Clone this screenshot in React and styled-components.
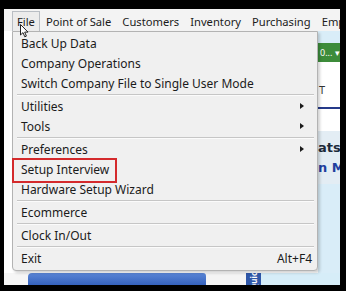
import React from "react";
import styled, { createGlobalStyle } from "styled-components";

const GlobalStyle = createGlobalStyle`
  html, body { margin: 0; padding: 0; background: #000; }
  * { box-sizing: border-box; }
`;

const Frame = styled.div`
  width: 346px;
  height: 291px;
  background: #000;
  padding: 9px 6px 6px 4px;
`;

const Window = styled.div`
  position: relative;
  height: 100%;
  background: #fff;
  display: flex;
  flex-direction: column;
  overflow: hidden;
  font-family: "Noto Sans", "Open Sans", sans-serif;
  font-size: 12px;
  color: #1b1b1b;
`;

const MenuBar = styled.div`
  height: 22px;
  flex: none;
  display: flex;
  align-items: stretch;
  padding: 2px 0 0 8px;
  background: #f3f3f3;
  white-space: nowrap;
  font-size: 11.2px;
`;

const BarItem = styled.div`
  display: flex;
  align-items: center;
  padding: 0 4px;
  margin-right: 1px;
  border: 1px solid ${(p) => (p.$open ? "#b9bec4" : "transparent")};
  border-bottom: 0;
  background: ${(p) => (p.$open ? "#ececec" : "transparent")};
`;

const Content = styled.div`
  flex: 1;
  display: grid;
  grid-template-columns: 1fr 22px;
  grid-template-rows: 1fr 12px;
`;

const LeftArea = styled.div`
  background: #fff;
`;

const RightPanel = styled.div`
  display: flex;
  flex-direction: column;
  padding-top: 12px;
  overflow: hidden;
  white-space: nowrap;
  background: #d9edf8;
`;

const GreenBar = styled.div`
  height: 19px;
  flex: none;
  background: #3d8c3a;
  color: #fff;
  font-size: 9px;
  display: flex;
  align-items: center;
  justify-content: space-between;
  padding: 0 0 0 2px;
`;

const WhiteBlock = styled.div`
  height: ${(p) => p.$h}px;
  flex: none;
  background: #fff;
  color: #333;
  padding: 22px 0 0 1px;
  font-size: 11px;
  line-height: 12px;
`;

const DarkLine = styled.div`
  height: 2px;
  flex: none;
  background: #253a8a;
`;

const StatBox = styled.div`
  height: 53px;
  flex: none;
  background: #e3edf4;
  display: flex;
  flex-direction: column;
  padding-top: 10px;
  gap: 6px;
  font-family: "DejaVu Sans", Verdana, sans-serif;
  font-weight: bold;
`;

const StatTitle = styled.span`
  font-size: 13px;
  line-height: 14px;
  color: ${(p) => p.$color};
`;

const BottomBar = styled.div`
  grid-column: 1 / span 2;
  display: flex;
  padding-left: 24px;
  background: #f6f6f6;
`;

const BlueButton = styled.div`
  width: 178px;
  background: linear-gradient(#5b86d6, #3562bd);
  border-top-left-radius: 4px;
  border-top-right-radius: 3px;
`;

const GapCell = styled.div`
  width: 40px;
  background: #f4f4f4;
`;

const BlueStrip = styled.div`
  width: 15px;
  background: #2f57a8;
  color: #fff;
  font-size: 8px;
  font-weight: bold;
  display: flex;
  justify-content: center;
  align-items: flex-start;
  overflow: hidden;
  writing-mode: vertical-rl;
  transform: rotate(180deg);
  line-height: 15px;
`;

const LightRest = styled.div`
  flex: 1;
  background: #d6edf8;
`;

const Dropdown = styled.div`
  position: absolute;
  left: 8px;
  top: 22px;
  width: 306px;
  height: 240px;
  background: #f0f0f0;
  border: 1px solid #b3b3b3;
  border-radius: 0 0 4px 4px;
  box-shadow: 2px 2px 3px rgba(0, 0, 0, 0.18);
  padding: 1px 0 0 0;
  display: flex;
  flex-direction: column;
`;

const Item = styled.div`
  position: relative;
  height: 20px;
  flex: none;
  display: flex;
  align-items: center;
  justify-content: space-between;
  padding: 0 5px 0 8px;
  white-space: nowrap;
`;

const Arrow = styled.span`
  width: 0;
  height: 0;
  margin-right: 8px;
  border-top: 3px solid transparent;
  border-bottom: 3px solid transparent;
  border-left: 4px solid #1b1b1b;
`;

const Shortcut = styled.span`
  color: #1b1b1b;
`;

const Separator = styled.div`
  height: 3px;
  flex: none;
  margin: 0 3px 0 4px;
  padding-top: 1px;
  &::before {
    content: "";
    display: block;
    height: 1px;
    background: #c6c6c6;
    border-bottom: 1px solid #fbfbfb;
    box-sizing: content-box;
  }
`;

const Annotation = styled.div`
  position: absolute;
  left: -1px;
  top: -1px;
  width: 105px;
  height: 25px;
  border: 2px solid #d42a2c;
  pointer-events: none;
`;

const Cursor = styled.svg`
  position: absolute;
  left: 16px;
  top: 15px;
  width: 9px;
  height: 14px;
`;

const barItems = ["File", "Point of Sale", "Customers", "Inventory", "Purchasing", "Employees"];

const menu = [
  { label: "Back Up Data" },
  { label: "Company Operations" },
  { label: "Switch Company File to Single User Mode" },
  { sep: true },
  { label: "Utilities", sub: true },
  { label: "Tools", sub: true },
  { sep: true },
  { label: "Preferences", sub: true },
  { label: "Setup Interview", mark: true },
  { label: "Hardware Setup Wizard" },
  { sep: true },
  { label: "Ecommerce" },
  { sep: true },
  { label: "Clock In/Out" },
  { sep: true },
  { label: "Exit", key: "Alt+F4" },
];

export default function App() {
  return (
    <>
      <GlobalStyle />
      <Frame>
        <Window>
          <MenuBar>
            {barItems.map((b, i) => (
              <BarItem key={b} $open={i === 0}>
                {b}
              </BarItem>
            ))}
          </MenuBar>
          <Content>
            <LeftArea />
            <RightPanel>
              <GreenBar>
                <span>0...</span>
                <span>▾</span>
              </GreenBar>
              <WhiteBlock $h={45}>T</WhiteBlock>
              <DarkLine />
              <WhiteBlock $h={7} />
              <StatBox>
                <StatTitle $color="#1d2b3a">ats</StatTitle>
                <StatTitle $color="#1f3f9e">n M</StatTitle>
              </StatBox>
            </RightPanel>
            <BottomBar>
              <BlueButton />
              <GapCell />
              <BlueStrip>Quick</BlueStrip>
              <LightRest />
            </BottomBar>
          </Content>
          <Dropdown>
            {menu.map((m, i) =>
              m.sep ? (
                <Separator key={i} />
              ) : (
                <Item key={i}>
                  <span>{m.label}</span>
                  {m.sub && <Arrow />}
                  {m.key && <Shortcut>{m.key}</Shortcut>}
                  {m.mark && <Annotation />}
                </Item>
              )
            )}
          </Dropdown>
          <Cursor viewBox="0 0 9 14">
            <path
              d="M0.5 0.5 L0.5 11 L3 8.6 L4.8 12.8 L6.4 12.1 L4.7 8.1 L8 8.1 Z"
              fill="#fff"
              stroke="#222"
              strokeWidth="1"
              strokeLinejoin="round"
            />
          </Cursor>
        </Window>
      </Frame>
    </>
  );
}
